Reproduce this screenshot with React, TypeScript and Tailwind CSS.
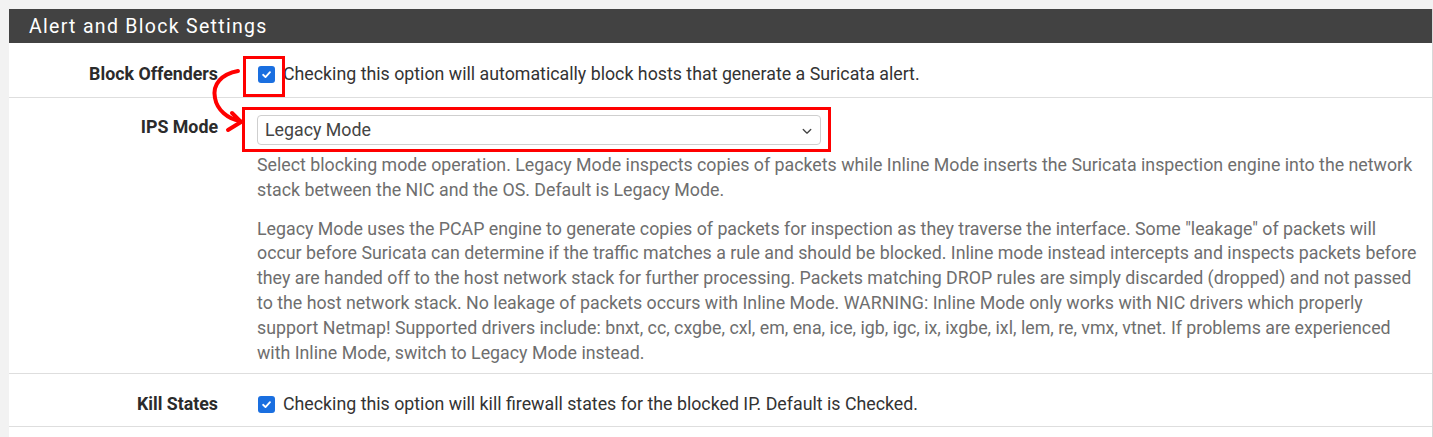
import React from 'react'

const font = { fontFamily: 'Roboto, "Liberation Sans", sans-serif' }

function Check() {
  return (
    <span className="inline-flex w-[17px] h-[17px] shrink-0 items-center justify-center rounded-[3px] bg-[#1a6fe0]">
      <svg viewBox="0 0 12 12" className="w-[11px] h-[11px]" fill="none" stroke="white" strokeWidth="2" strokeLinecap="round" strokeLinejoin="round">
        <path d="M2.3 6.3 L4.9 8.8 L9.8 3.4" />
      </svg>
    </span>
  )
}

function Row({ label, children, className }: { label: string; children: React.ReactNode; className?: string }) {
  return (
    <div className={`flex items-start border-b border-[#dedede] ${className ?? ''}`}>
      <div className="w-[229px] shrink-0 pr-[20px] text-right font-bold text-[#2b2b2b]">{label}</div>
      <div className="flex-1 pl-[19px] pr-[4px]">{children}</div>
    </div>
  )
}

export default function App() {
  return (
    <div className="relative min-h-screen bg-[#f2f2f2] pt-[9px] pl-[9px] text-[17.8px] leading-[24.8px]" style={font}>
      <div className="bg-white border-r border-[#d8d8d8]">
        {/* Panel heading */}
        <div className="h-[34px] bg-[#424242] pl-[20px] pt-[2px] flex items-center">
          <h2 className="text-white text-[19.5px] tracking-[1.3px]">Alert and Block Settings</h2>
        </div>

        <Row label="Block Offenders" className="h-[55px] pt-[19px]">
          <label className="flex items-center gap-[8px] pl-px text-[#333]">
            <Check />
            Checking this option will automatically block hosts that generate a Suricata alert.
          </label>
        </Row>

        <Row label="IPS Mode" className="h-[276px] pt-[17px]">
          <div className="relative w-[564px] h-[30px] border border-[#cfcfcf] rounded-[4px] flex items-center pl-[7px] text-[#444]">
            Legacy Mode
            <svg viewBox="0 0 12 8" className="absolute right-[8px] top-[12px] w-[10px] h-[7px]" fill="none" stroke="#444" strokeWidth="1.6" strokeLinecap="round" strokeLinejoin="round">
              <path d="M1.5 1.5 L6 6 L10.5 1.5" />
            </svg>
          </div>
          <div className="mt-[8px] text-[#6e6e6e] whitespace-nowrap">
            <p>
              Select blocking mode operation. Legacy Mode inspects copies of packets while Inline Mode inserts the Suricata inspection engine into the network
              <br />
              stack between the NIC and the OS. Default is Legacy Mode.
            </p>
            <p className="mt-[14px]">
              Legacy Mode uses the PCAP engine to generate copies of packets for inspection as they traverse the interface. Some "leakage" of packets will
              <br />
              occur before Suricata can determine if the traffic matches a rule and should be blocked. Inline mode instead intercepts and inspects packets before
              <br />
              they are handed off to the host network stack for further processing. Packets matching DROP rules are simply discarded (dropped) and not passed
              <br />
              to the host network stack. No leakage of packets occurs with Inline Mode. WARNING: Inline Mode only works with NIC drivers which properly
              <br />
              support Netmap! Supported drivers include: bnxt, cc, cxgbe, cxl, em, ena, ice, igb, igc, ix, ixgbe, ixl, lem, re, vmx, vtnet. If problems are experienced
              <br />
              with Inline Mode, switch to Legacy Mode instead.
            </p>
          </div>
        </Row>

        <Row label="Kill States" className="h-[53px] pt-[18px]">
          <label className="flex items-center gap-[8px] pl-px text-[#333]">
            <Check />
            Checking this option will kill firewall states for the blocked IP. Default is Checked.
          </label>
        </Row>
        <div className="h-[20px]" />
      </div>

      {/* red annotations */}
      <div className="absolute left-[243px] top-[56px] w-[42px] h-[41px] border-[3.5px] border-[#f00]" />
      <div className="absolute left-[242px] top-[107px] w-[589px] h-[45px] border-[3.5px] border-[#f00]" />
      <svg className="absolute left-0 top-0 w-[300px] h-[160px] pointer-events-none" viewBox="0 0 300 160" fill="none" stroke="#f00" strokeWidth="4" strokeLinecap="round" strokeLinejoin="round">
        <path d="M238 71 C 222 74, 212 84, 215 98 C 217 110, 228 119, 240 121" />
        <path d="M232 113 L241 122 L228 130" />
      </svg>
    </div>
  )
}
